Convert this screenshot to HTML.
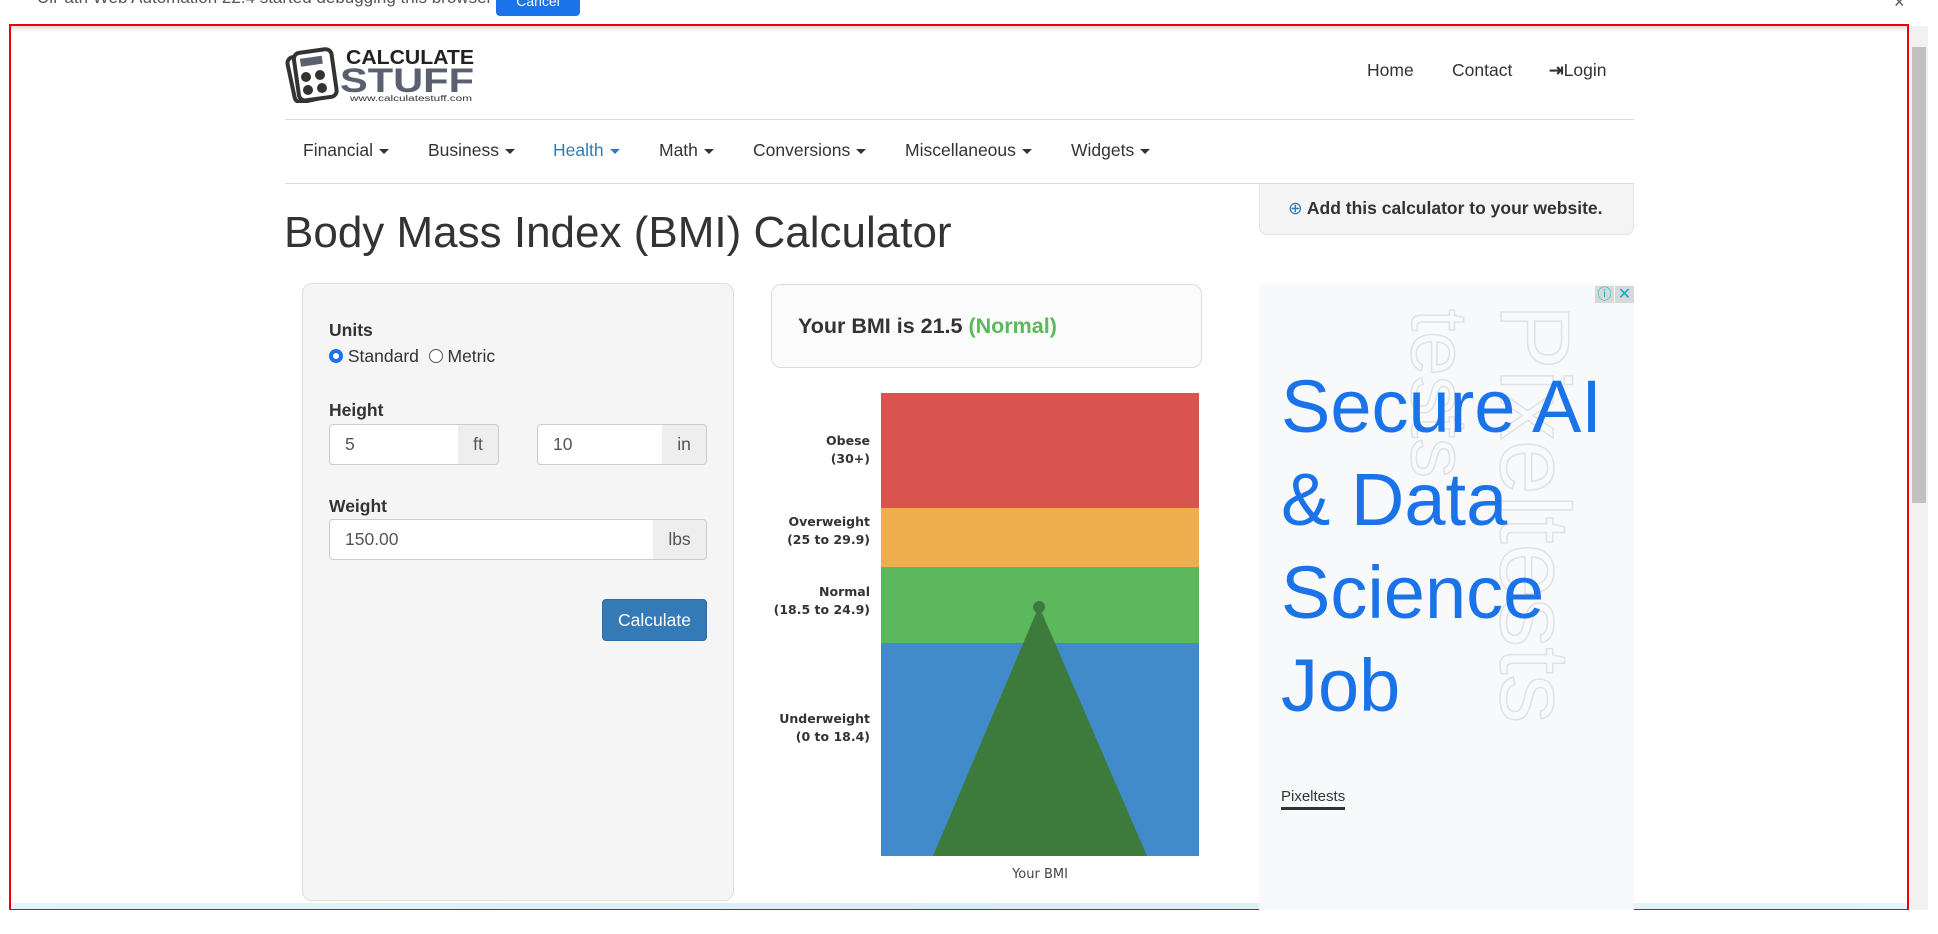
<!DOCTYPE html>
<html><head><meta charset="utf-8"><style>
*{box-sizing:border-box;margin:0;padding:0}
body{width:1938px;height:934px;overflow:hidden;background:#fff;font-family:"Liberation Sans",Arial,sans-serif;color:#333;position:relative}
.a{position:absolute}
.nav{font-size:17.5px;color:#333;top:140px}
.car{display:inline-block;width:0;height:0;border-left:5px solid transparent;border-right:5px solid transparent;border-top:5px solid #333;vertical-align:middle;margin-left:6px}
.lbl{font-weight:bold;font-size:17.5px;color:#333}
.inp{border:1px solid #ccc;background:#fff;border-radius:4px 0 0 4px;font-size:17.5px;padding:0 15px;line-height:39px;color:#555}
.add{border:1px solid #ccc;border-left:none;background:#eee;border-radius:0 4px 4px 0;font-size:17.5px;text-align:center;line-height:39px;color:#555}
.cl{font-family:"DejaVu Sans",sans-serif;font-weight:bold;font-size:12.5px;color:#333;text-align:right;width:200px;left:670px;line-height:18px}
</style></head><body>
<div class="a" style="left:37px;top:-12px;font-size:17px;color:#555">UiPath Web Automation 22.4 started debugging this browser</div>
<div class="a" style="left:496px;top:-8px;width:84px;height:24px;background:#1a73e8;border-radius:4px;color:#fff;font-size:14px;text-align:center;line-height:18px">Cancel</div>
<div class="a" style="left:1894px;top:-8px;font-size:18px;color:#555">×</div>
<div class="a" style="left:9px;top:24px;width:1900px;height:886px;border:2px solid #e00"></div>
<div class="a" style="left:11px;top:26px;width:1896px;height:6px;background:linear-gradient(#ddd,#fff)"></div>
<div class="a" style="left:1910px;top:26px;width:18px;height:884px;background:#f1f1f1"></div>
<div class="a" style="left:1912px;top:47px;width:14px;height:456px;background:#c1c1c1"></div>
<div class="a" style="left:11px;top:903px;width:1896px;height:6px;background:linear-gradient(90deg,#e6f3f8,#d8eef5,#e6f3f8)"></div>

<svg class="a" style="left:284px;top:43px" width="192" height="60" viewBox="0 0 192 60">
<g transform="rotate(-12 30 30)"><rect x="6" y="10" width="40" height="46" rx="6" fill="#fff" stroke="#333" stroke-width="4"/></g>
<rect x="12" y="8" width="38" height="48" rx="6" fill="#fff" stroke="#333" stroke-width="4" transform="rotate(-8 30 30)"/>
<rect x="18" y="14" width="22" height="8" fill="#5a6070" transform="rotate(-8 30 30)"/>
<circle cx="22" cy="34" r="5" fill="#333"/><circle cx="36" cy="32" r="5" fill="#333"/>
<circle cx="24" cy="47" r="5" fill="#333"/><circle cx="38" cy="45" r="5" fill="#333"/>
<text x="62" y="21" font-family="Liberation Sans" font-weight="bold" font-size="20" fill="#222" textLength="128" lengthAdjust="spacingAndGlyphs">CALCULATE</text>
<text x="56" y="49" font-family="Liberation Sans" font-weight="bold" font-size="34" fill="#5a6070" textLength="134" lengthAdjust="spacingAndGlyphs">STUFF</text>
<text x="66" y="58" font-family="Liberation Sans" font-size="8" fill="#333" textLength="122" lengthAdjust="spacingAndGlyphs">www.calculatestuff.com</text>
</svg>
<div class="a" style="left:1367px;top:60px;font-size:17.5px">Home</div>
<div class="a" style="left:1452px;top:60px;font-size:17.5px">Contact</div>
<div class="a" style="left:1549px;top:60px;font-size:17.5px"><span style="font-weight:bold">⇥</span>Login</div>
<div class="a" style="left:285px;top:119px;width:1349px;height:1px;background:#ddd"></div>
<div class="a nav" style="left:303px">Financial<span class="car"></span></div>
<div class="a nav" style="left:428px">Business<span class="car"></span></div>
<div class="a nav" style="left:553px;color:#337ab7">Health<span class="car" style="border-top-color:#337ab7"></span></div>
<div class="a nav" style="left:659px">Math<span class="car"></span></div>
<div class="a nav" style="left:753px">Conversions<span class="car"></span></div>
<div class="a nav" style="left:905px">Miscellaneous<span class="car"></span></div>
<div class="a nav" style="left:1071px">Widgets<span class="car"></span></div>
<div class="a" style="left:285px;top:183px;width:1349px;height:1px;background:#ddd"></div>
<div class="a" style="left:1259px;top:184px;width:375px;height:51px;background:#f5f5f5;border:1px solid #e3e3e3;border-top:none;border-radius:0 0 8px 8px;font-weight:bold;font-size:17.5px;line-height:48px;padding-left:28px"><span style="color:#337ab7;font-weight:normal">⊕</span> Add this calculator to your website.</div>
<div class="a" style="left:284px;top:208px;font-size:44px;color:#333">Body Mass Index (BMI) Calculator</div>
<div class="a" style="left:302px;top:283px;width:432px;height:618px;background:#f5f5f5;border:1px solid #ddd;border-radius:10px"></div>
<div class="a lbl" style="left:329px;top:320px">Units</div>
<div class="a" style="left:329px;top:346px;font-size:17.5px;color:#333"><span style="display:inline-block;width:14px;height:14px;border-radius:50%;border:4px solid #1a73e8;background:#fff;vertical-align:-1px"></span> Standard &nbsp;<span style="display:inline-block;width:14px;height:14px;border-radius:50%;border:1px solid #555;background:#fff;vertical-align:-1px"></span> Metric</div>
<div class="a lbl" style="left:329px;top:400px">Height</div>
<div class="a inp" style="left:329px;top:424px;width:130px;height:41px">5</div>
<div class="a add" style="left:458px;top:424px;width:41px;height:41px">ft</div>
<div class="a inp" style="left:537px;top:424px;width:126px;height:41px">10</div>
<div class="a add" style="left:662px;top:424px;width:45px;height:41px">in</div>
<div class="a lbl" style="left:329px;top:496px">Weight</div>
<div class="a inp" style="left:329px;top:519px;width:325px;height:41px">150.00</div>
<div class="a add" style="left:653px;top:519px;width:54px;height:41px">lbs</div>
<div class="a" style="left:602px;top:599px;width:105px;height:42px;background:#337ab7;border:1px solid #2e6da4;border-radius:4px;color:#fff;font-size:17.5px;text-align:center;line-height:40px">Calculate</div>
<div class="a" style="left:771px;top:284px;width:431px;height:84px;background:#fbfbfb;border:1px solid #ddd;border-radius:10px;font-weight:bold;font-size:21.5px;line-height:82px;padding-left:26px">Your BMI is 21.5 <span style="color:#5cb85c">(Normal)</span></div>
<div class="a" style="left:881px;top:393px;width:318px;height:115px;background:#d9534f"></div>
<div class="a" style="left:881px;top:508px;width:318px;height:59px;background:#f0ad4e"></div>
<div class="a" style="left:881px;top:567px;width:318px;height:76px;background:#5cb85c"></div>
<div class="a" style="left:881px;top:643px;width:318px;height:213px;background:#428bca"></div>
<svg class="a" style="left:881px;top:393px" width="318" height="463"><polygon points="158,213 52,463 266,463" fill="#3d7b3d"/><circle cx="158" cy="214" r="6" fill="#3d7b3d"/></svg>
<div class="a cl" style="top:432px">Obese<br>(30+)</div>
<div class="a cl" style="top:513px">Overweight<br>(25 to 29.9)</div>
<div class="a cl" style="top:583px">Normal<br>(18.5 to 24.9)</div>
<div class="a cl" style="top:710px">Underweight<br>(0 to 18.4)</div>
<div class="a" style="left:995px;top:867px;width:90px;text-align:center;font-family:'DejaVu Sans',sans-serif;font-size:13px;color:#444">Your BMI</div>
<div class="a" style="left:1259px;top:284px;width:375px;height:626px;background:#f8f9fb;overflow:hidden">
<div class="a" style="left:332px;top:20px;transform:rotate(90deg);transform-origin:0 0;font-size:98px;color:transparent;-webkit-text-stroke:1.5px #e0e1e3;white-space:nowrap">Pixeltests</div>
<div class="a" style="left:226px;top:25px;transform:rotate(90deg);transform-origin:0 0;font-size:80px;color:transparent;-webkit-text-stroke:1.5px #e0e1e3;white-space:nowrap">tests</div>
<div class="a" style="left:22px;top:76px;font-size:74px;line-height:93px;color:#1a73e8">Secure AI<br>&amp; Data<br>Science<br>Job</div>
<div class="a" style="left:22px;top:504px;font-size:15px;color:#333;border-bottom:3px solid #333;padding-bottom:2px">Pixeltests</div>
<div class="a" style="left:336px;top:2px;width:19px;height:17px;background:#d8d8d8;color:#00aecd;font-size:14px;text-align:center;line-height:17px">ⓘ</div>
<div class="a" style="left:356px;top:2px;width:19px;height:17px;background:#d8d8d8;color:#00aecd;font-size:16px;text-align:center;line-height:17px">✕</div>
</div>
</body></html>
